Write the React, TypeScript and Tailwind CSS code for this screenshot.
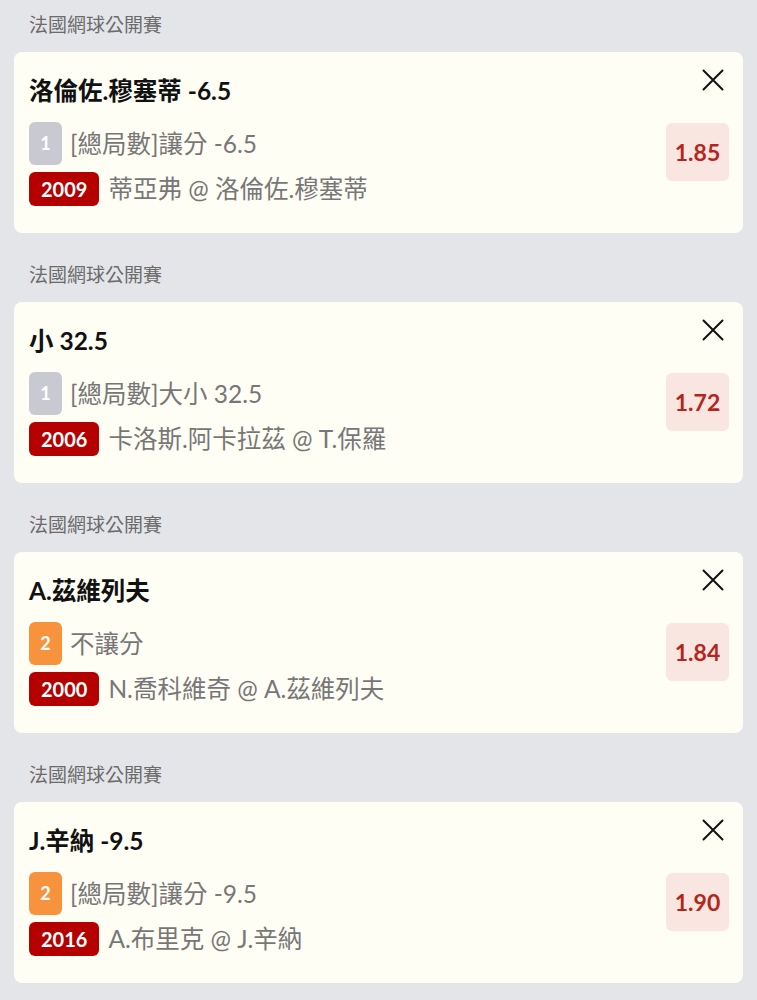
const bets = [
  {
    league: "法國網球公開賽",
    title: "洛倫佐.穆塞蒂 -6.5",
    leg: 1,
    market: "[總局數]讓分 -6.5",
    code: "2009",
    match: "蒂亞弗 @ 洛倫佐.穆塞蒂",
    odds: "1.85",
  },
  {
    league: "法國網球公開賽",
    title: "小 32.5",
    leg: 1,
    market: "[總局數]大小 32.5",
    code: "2006",
    match: "卡洛斯.阿卡拉茲 @ T.保羅",
    odds: "1.72",
  },
  {
    league: "法國網球公開賽",
    title: "A.茲維列夫",
    leg: 2,
    market: "不讓分",
    code: "2000",
    match: "N.喬科維奇 @ A.茲維列夫",
    odds: "1.84",
  },
  {
    league: "法國網球公開賽",
    title: "J.辛納 -9.5",
    leg: 2,
    market: "[總局數]讓分 -9.5",
    code: "2016",
    match: "A.布里克 @ J.辛納",
    odds: "1.90",
  },
]

const CloseIcon = () => (
  <svg width="22" height="22" viewBox="0 0 22 22" fill="none" stroke="#111" strokeWidth="2" strokeLinecap="round">
    <path d="M1.5 1.5 L20.5 20.5 M20.5 1.5 L1.5 20.5" />
  </svg>
)

type Bet = (typeof bets)[number]

const BetCard = ({ bet }: { bet: Bet }) => {
  return (
    <div>
      <p className="pt-3 mb-[14px] pl-[29px] text-[19px] leading-[26px] text-[#6b6b6b]">{bet.league}</p>

      <div className="relative mx-[14px] mb-[17px] rounded-lg bg-[#fffef5] pt-6 pb-[27px] pl-[15px] pr-[14px] flex">
        <div className="flex-1 flex flex-col">
          <h2 className="text-[24.5px] leading-[30px] font-bold text-[#111]">{bet.title}</h2>

          <div className="mt-4 flex items-center gap-2">
            <div
              className={
                bet.leg === 1
                  ? "w-[33px] h-[43px] rounded-md bg-[#c9c9d1] flex items-center justify-center text-white font-bold text-[18px]"
                  : "w-[33px] h-[43px] rounded-md bg-[#f7933c] flex items-center justify-center text-white font-bold text-[18px]"
              }
            >
              {bet.leg}
            </div>
            <p className="text-[24.5px] leading-[30px] text-[#777]">{bet.market}</p>
          </div>

          <div className="mt-[7px] flex items-center gap-[9px]">
            <div className="h-[34px] px-3 rounded-md bg-[#b50000] flex items-center text-white font-bold text-[20px]">
              {bet.code}
            </div>
            <p className="text-[24.5px] leading-[30px] text-[#777]">{bet.match}</p>
          </div>
        </div>

        <div className="self-start mt-[47px] w-[63px] h-[58px] rounded-md bg-[#f9e6e0] flex items-center justify-center text-[23px] font-bold text-[#b3261e]">
          {bet.odds}
        </div>

        <button className="absolute top-[17px] right-[19px]">
          <CloseIcon />
        </button>
      </div>
    </div>
  )
}

export default function App() {
  return (
    <div
      className="w-[757px] h-[1000px] overflow-hidden bg-[#e4e5e9]"
      style={{ fontFamily: "Lato, 'Noto Sans CJK TC', sans-serif" }}
    >
      {bets.map((bet, i) => (
        <BetCard key={i} bet={bet} />
      ))}
    </div>
  )
}
